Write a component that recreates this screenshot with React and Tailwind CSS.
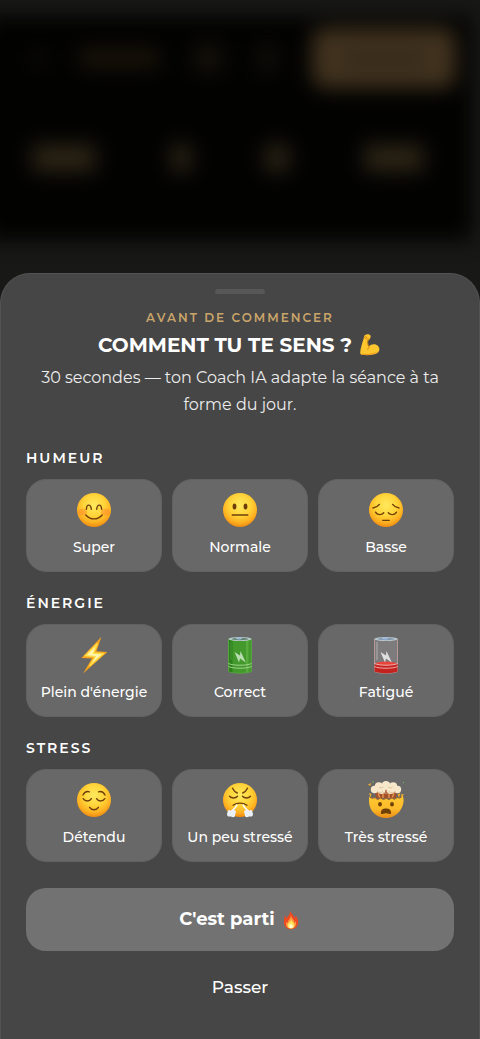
import React, { useId, useState } from "react";

// Yellow ball shared by the mood faces
const Face = ({ children }) => {
  const id = useId();

  return (
    <svg viewBox="0 0 40 40" className="size-10" fill="none" aria-hidden="true">
      <defs>
        <radialGradient id={id} cx="50%" cy="36%" r="64%">
          <stop offset="0" stopColor="#ffe95e" />
          <stop offset="0.5" stopColor="#ffd338" />
          <stop offset="0.8" stopColor="#fdb021" />
          <stop offset="1" stopColor="#ee8a12" />
        </radialGradient>
      </defs>
      <circle cx="20" cy="20" r="17" fill={`url(#${id})`} />
      <g stroke="#6f3f0a" strokeWidth="1.4" strokeLinecap="round" strokeLinejoin="round">
        {children}
      </g>
    </svg>
  );
};

const HappyFace = () => (
  <Face>
    <ellipse cx="8.5" cy="22" rx="4.5" ry="3.5" fill="#ff7a2b" fillOpacity="0.4" stroke="none" />
    <ellipse cx="31.5" cy="22" rx="4.5" ry="3.5" fill="#ff7a2b" fillOpacity="0.4" stroke="none" />
    <path d="M12.4 19.2c.2-5.4 4.4-5.4 4.9 0" />
    <path d="M22.7 19.2c.5-5.4 4.7-5.4 4.9 0" />
    <path d="M11.8 25c4.2 5.2 12.2 5.2 16.4 0" />
  </Face>
);

const NeutralFace = () => (
  <Face>
    <ellipse cx="14.5" cy="16.5" rx="1.9" ry="3" fill="#6f3f0a" stroke="none" />
    <ellipse cx="25.5" cy="16.5" rx="1.9" ry="3" fill="#6f3f0a" stroke="none" />
    <path d="M12.2 25h15.6" />
  </Face>
);

const SadFace = () => (
  <Face>
    <path d="M7 18c2.7-.4 4.8-1.5 6.4-3.6" />
    <path d="M33 18c-2.7-.4-4.8-1.5-6.4-3.6" />
    <path d="M9.5 22.2c1.6 3 6.2 3.2 8.2.6" />
    <path d="M30.5 22.2c-1.6 3-6.2 3.2-8.2.6" />
    <path d="M16.8 30.4h6.4" />
  </Face>
);

const RelievedFace = () => (
  <Face>
    <path d="M9 15c1.3-2.8 4-3.9 6.4-3.2" />
    <path d="M31 15c-1.3-2.8-4-3.9-6.4-3.2" />
    <path d="M9.2 18.7c2 3.1 6.4 3.1 8.2 0" />
    <path d="M22.6 18.7c1.8 3.1 6.2 3.1 8.2 0" />
    <path d="M15.6 27.3c2 3.2 6.8 3.2 8.8 0" />
  </Face>
);

const HuffingFace = () => (
  <Face>
    <path d="M12.5 8.2c1 2.1 2.6 3.8 4.8 4.8" />
    <path d="M27.5 8.2c-1 2.1-2.6 3.8-4.8 4.8" />
    <path d="M9.5 16.3c2 2.2 6 2.2 8 0" />
    <path d="M22.5 16.3c2 2.2 6 2.2 8 0" />
    <path d="M13 25.2c4-2.8 10-2.8 14 0" />
    <path d="M16.8 25c-.8 2.3-1.8 3.6-3.8 4.6M23.2 25c.8 2.3 1.8 3.6 3.8 4.6" stroke="#fff" strokeWidth="1.6" />
    <g fill="#e9f0f8" stroke="none">
      <circle cx="13" cy="32.2" r="2.8" />
      <circle cx="9.6" cy="34" r="2.6" />
      <circle cx="13" cy="35" r="2.3" />
      <circle cx="9.2" cy="31.6" r="1.6" />
      <circle cx="27" cy="32.2" r="2.8" />
      <circle cx="30.4" cy="34" r="2.6" />
      <circle cx="27" cy="35" r="2.3" />
      <circle cx="30.8" cy="31.6" r="1.6" />
    </g>
  </Face>
);

const ExplodingHead = () => (
  <svg viewBox="0 0 40 40" className="size-10" fill="none" aria-hidden="true">
    <defs>
      <linearGradient id="head" x1="0" y1="15" x2="0" y2="38" gradientUnits="userSpaceOnUse">
        <stop stopColor="#ffc931" />
        <stop offset="0.6" stopColor="#fdbb2a" />
        <stop offset="1" stopColor="#ea8b16" />
      </linearGradient>
    </defs>
    <path d="M8 9h24l-2.500 9h-19Z" fill="#a5502c" />
    <path d="M12 13.500l1.800 4M17 14v4M23 14v4M28 13l-1.600 4.500" stroke="#e69a52" strokeWidth="1.300" />
    <path d="M3.400 16.500l2.800 1.600 2.800-.8 2.600 2 3-1.600 2.800 1.500 2.800-1.200 2.800 1.200 2.800-1.500 2.600 1.300 2.800-1.800 2.400.6 3.200-2c.6 1.800.9 3.700.8 5.700C36.300 31 29.500 38 20 38S3.300 31 3 21.500c-.1-1.700 0-3.400.4-5Z" fill="url(#head)" />
    <path d="M4 17.200l2.200 1.200 2.800-.8 2.600 2 3-1.600 2.800 1.500 2.800-1.200 2.800 1.200 2.800-1.500 2.600 1.300 2.800-1.800 2.400.6 2.400-1.400" stroke="#8b5a3a" strokeWidth="1" />
    <g fill="#f7e8cb">
      <circle cx="8.500" cy="9.500" r="3.700" />
      <circle cx="12.800" cy="6.200" r="4" />
      <circle cx="20" cy="5.400" r="4.400" />
      <circle cx="27.200" cy="6.200" r="4" />
      <circle cx="31.500" cy="9.500" r="3.700" />
      <circle cx="15.500" cy="10" r="4" />
      <circle cx="24.500" cy="10" r="4" />
    </g>
    <path d="M11 11.800c1.800 1.600 4 1.500 5.400-.2 2.100 2.200 5 2.100 7 0 1.600 1.700 4.300 1.800 6 0M13 7c1.500 1.300 3.300 1.200 4.500-.2M22 7c1.500 1.300 3.300 1.200 4.500-.2" stroke="#d9b68c" strokeWidth="0.800" />
    <path d="m2 4.500 3.200-1.500-1 3ZM31.500 14.500l3-1.500-1.500 4.500ZM3 13l2.500 1-1 3.500ZM35 14.500l3-.5-2.500 4Z" fill="#f2ae27" />
    <path d="m6 1.800 2-.6-1 2ZM36.500 2.500l1.500-.8v1.800Z" fill="#74b95a" />
    <ellipse cx="14" cy="24.200" rx="1.900" ry="2.300" fill="#704009" />
    <ellipse cx="26" cy="24.200" rx="1.900" ry="2.300" fill="#704009" />
    <path d="M15 33.200c-.3-3.300 2-4.700 5-4.700s5.300 1.400 5 4.700c-.1 1-.8 1.100-1.600.7-2.200-.9-4.600-.9-6.800 0-.8.4-1.500.3-1.600-.7Z" fill="#704009" />
  </svg>
);

const Bolt = () => (
  <svg viewBox="0 0 40 40" className="size-10" fill="none" aria-hidden="true">
    <path d="M27.400 1.800 7.300 22.900l10.600.7-8.800 15 24.300-21.500-10.900-.8Z" fill="#f5a21c" />
    <path d="M23.400 8.500 11.300 20.700l9.800.8-5.500 9.500 13.700-12.300-9.600-.7Z" fill="#fff7b0" stroke="#ffdb47" strokeWidth="1.400" />
  </svg>
);

const Battery = ({ low }) => (
  <svg viewBox="0 0 40 40" className="size-10" fill="none" aria-hidden="true">
    <path
      d="M8.500 4v32c0 1.300 5.200 2.200 11.500 2.200s11.500-.9 11.500-2.200V4Z"
      fill={low ? "#7d7b7b" : "#43992b"}
      stroke={low ? "#c9a0a0" : "#5aa944"}
      strokeWidth="0.800"
    />
    {low ? (
      <>
        <path d="M8.500 29c4 1.600 19 1.600 23 0v7c0 1.300-5.200 2.200-11.500 2.200S8.500 37.300 8.500 36Z" fill="#c4221f" />
        <ellipse cx="20" cy="28.500" rx="10.500" ry="1.900" fill="#e8443b" />
      </>
    ) : (
      <>
        <path d="M9 5h3.500v32.300c-2-.3-3.500-.8-3.500-1.500Z" fill="#2b8219" />
        <path d="M26 5h2.500v32l-2.500.5Z" fill="#6dbd4d" fillOpacity="0.500" />
      </>
    )}
    <path d="M8.500 28.500c4 2.300 19 2.300 23 0M8.500 31.500c4 2.300 19 2.300 23 0" stroke={low ? "#f1b9b5" : "#a9d99a"} strokeWidth="0.900" />
    <ellipse cx="20" cy="4" rx="11.500" ry="2" fill="#b9c8cd" />
    <ellipse cx="20" cy="4" rx="8.500" ry="1.200" fill={low ? "#8195ad" : "#5d806b"} />
    <ellipse cx="19" cy="3.500" rx="3.200" ry="0.900" fill="#9bbce0" />
    <path d="m14.500 17 5.500 3.500.5-4.500 5.300 11.500-5.800-4-1 4Z" fill={low ? "#e0e0e0" : "#b8dcb0"} />
    <path d="M11 7v18" stroke="#fff" strokeOpacity={low ? "0.400" : "0.150"} />
  </svg>
);

const Biceps = () => (
  <svg viewBox="0 0 24 24" className="size-6" role="img" aria-label="Biceps">
    <path
      d="M6.400 2.500c2-1.700 5.500-1.600 6.100.3.500 1.600-.2 2.700-1.300 3.900l-1.600 1c-.3 2.400.2 4.100 1.300 5.700 2.200-2.500 6.300-2.800 8.600-.8 2.300 2 2.500 5.200.5 6.800-2.900 2.300-9 3.300-16 2.400C2.300 21.500 2 20.300 2.300 18.500c.5-4 1.700-7.700 2.900-11.500Z"
      fill="#fdc62e"
    />
    <path d="M6.300 4.500c1.200 1.300 2.800 2 4.700 1.300M7.200 2.900l1.500 1.800M9.800 7.500c-.3 2.700.1 4.600 1.200 6.300-.8 1-1.200 1.800-1.200 2.700" fill="none" stroke="#d98511" strokeWidth="0.900" strokeLinecap="round" />
    <path d="M3.500 20.500c5.500 1.200 12 .4 16.500-2.200-2.600 3.200-8.500 4.300-15.700 3.500Z" fill="#e99619" />
  </svg>
);

const Flame = () => (
  <svg viewBox="0 0 24 24" className="size-5" role="img" aria-label="Flamme">
    <path d="M11 1c.8 2.800 4.200 5 5.200 8.700.9-.8 1.200-2.200 1-3.400 2.600 3.300 4 6.500 3.200 10.200C19.600 20.800 16.200 23 12 23s-7.700-2.300-8.400-6.600C3 12.700 4.200 10 4.600 6.300c1 1 1.500 2.200 1.600 3.500C8.900 7.800 11 4.800 11 1Z" fill="#ee4a22" />
    <path d="M11.800 6c.3 3.500 4.400 5.600 4.500 9.500l1.500-2c1.100 5-1.300 8.800-5.800 8.800-4.400 0-6.800-3.300-5.900-7.800l1.600 1.500c.3-3.800 4.100-5.500 4.100-10Z" fill="#ff9a3e" />
    <path d="M12.400 11.500c.2 2.500 3.600 3.900 3.600 7 0 2.300-1.700 3.700-4 3.700s-4.100-1.500-4.100-3.700c0-3 4.100-4 4.500-7Z" fill="#ffe45c" />
    <ellipse cx="12" cy="19.500" rx="2.300" ry="2.500" fill="#fffad2" />
  </svg>
);

const questions = [
  {
    id: "humeur",
    title: "HUMEUR",
    options: [
      { label: "Super", icon: <HappyFace /> },
      { label: "Normale", icon: <NeutralFace /> },
      { label: "Basse", icon: <SadFace /> },
    ],
  },
  {
    id: "energie",
    title: "ÉNERGIE",
    options: [
      { label: "Plein d'énergie", icon: <Bolt /> },
      { label: "Correct", icon: <Battery /> },
      { label: "Fatigué", icon: <Battery low /> },
    ],
  },
  {
    id: "stress",
    title: "STRESS",
    options: [
      { label: "Détendu", icon: <RelievedFace /> },
      { label: "Un peu stressé", icon: <HuffingFace /> },
      { label: "Très stressé", icon: <ExplodingHead /> },
    ],
  },
];

// Dimmed dashboard behind the sheet
const Backdrop = () => (
  <div className="absolute inset-x-0 top-0 overflow-hidden pt-4 pb-10" aria-hidden="true">
    <div className="mr-2 -ml-4 flex h-56 flex-col bg-[#020201] pt-3 pr-4 pl-12 blur-[10px]">
      <div className="flex items-center justify-between">
        <div className="h-4 w-3 bg-[#100d09]" />
        <div className="h-5 w-20 bg-[#191309]" />
        <div className="h-7 w-7 bg-[#15110a]" />
        <div className="h-7 w-5 bg-[#110e08]" />
        <div className="flex h-15 w-36 items-center justify-center rounded-xl bg-[#41321e]">
          <div className="h-3 w-20 bg-[#32261a]" />
        </div>
      </div>
      <div className="mt-14 flex items-center justify-between pr-8">
        <div className="h-7 w-16 bg-[#2b2315]" />
        <div className="h-7 w-5 bg-[#2b2315]" />
        <div className="h-7 w-6 bg-[#2b2315]" />
        <div className="h-7 w-15 bg-[#2b2315]" />
      </div>
    </div>
  </div>
);

const App = () => {
  const [answers, setAnswers] = useState({});

  const handleSelect = (id, label) => {
    setAnswers((prev) => ({ ...prev, [id]: label }));
  };

  return (
    <main className="relative flex min-h-screen flex-col justify-end bg-[#181817] font-['Montserrat','Inter',sans-serif] text-white">
      <Backdrop />

      <section className="relative flex flex-col rounded-t-[30px] border border-b-0 border-[#525252] bg-[#464646] px-[25px] pt-[15px] pb-[27px]">
        <div className="h-[5px] w-[50px] self-center rounded-full bg-[#575757]" />

        <header className="text-center">
          <p className="mt-[14px] text-[12px] leading-5 font-semibold tracking-[2px] text-[#c9a56a]">
            AVANT DE COMMENCER
          </p>
          <h1 className="mt-[3px] flex items-center justify-center gap-[6px] text-[20px] leading-7 font-bold">
            COMMENT TU TE SENS ? <Biceps />
          </h1>
          <p className="mt-[5px] text-[16px] leading-[27px] font-normal text-[#ececec]">
            30 secondes — ton Coach IA adapte la séance à ta forme du jour.
          </p>
        </header>

        <div className="mt-[30px] flex flex-col gap-[21px]">
          {questions.map((question) => (
            <div key={question.id} role="group" aria-labelledby={question.id}>
              <h2 id={question.id} className="text-[14px] leading-5 font-semibold tracking-[2px]">
                {question.title}
              </h2>
              <div className="mt-[11px] grid grid-cols-3 gap-[10px]">
                {question.options.map((option) => (
                  <button
                    key={option.label}
                    type="button"
                    aria-pressed={answers[question.id] === option.label}
                    onClick={() => handleSelect(question.id, option.label)}
                    className="flex cursor-pointer flex-col items-center rounded-[20px] border border-[#616161] bg-[#686868] pt-[10px] pb-[14px] aria-pressed:border-[#c9a56a]"
                  >
                    {option.icon}
                    <span className="mt-[7px] text-[14px] leading-5 font-medium">
                      {option.label}
                    </span>
                  </button>
                ))}
              </div>
            </div>
          ))}
        </div>

        <button
          type="button"
          className="mt-[26px] flex h-[63px] cursor-pointer items-center justify-center gap-[6px] rounded-[20px] bg-[#727272] text-[18px] font-bold"
        >
          C'est parti <Flame />
        </button>
        <button
          type="button"
          className="mt-[13px] h-12 cursor-pointer self-center px-6 text-[17px] font-medium"
        >
          Passer
        </button>
      </section>
    </main>
  );
};

export default App;
